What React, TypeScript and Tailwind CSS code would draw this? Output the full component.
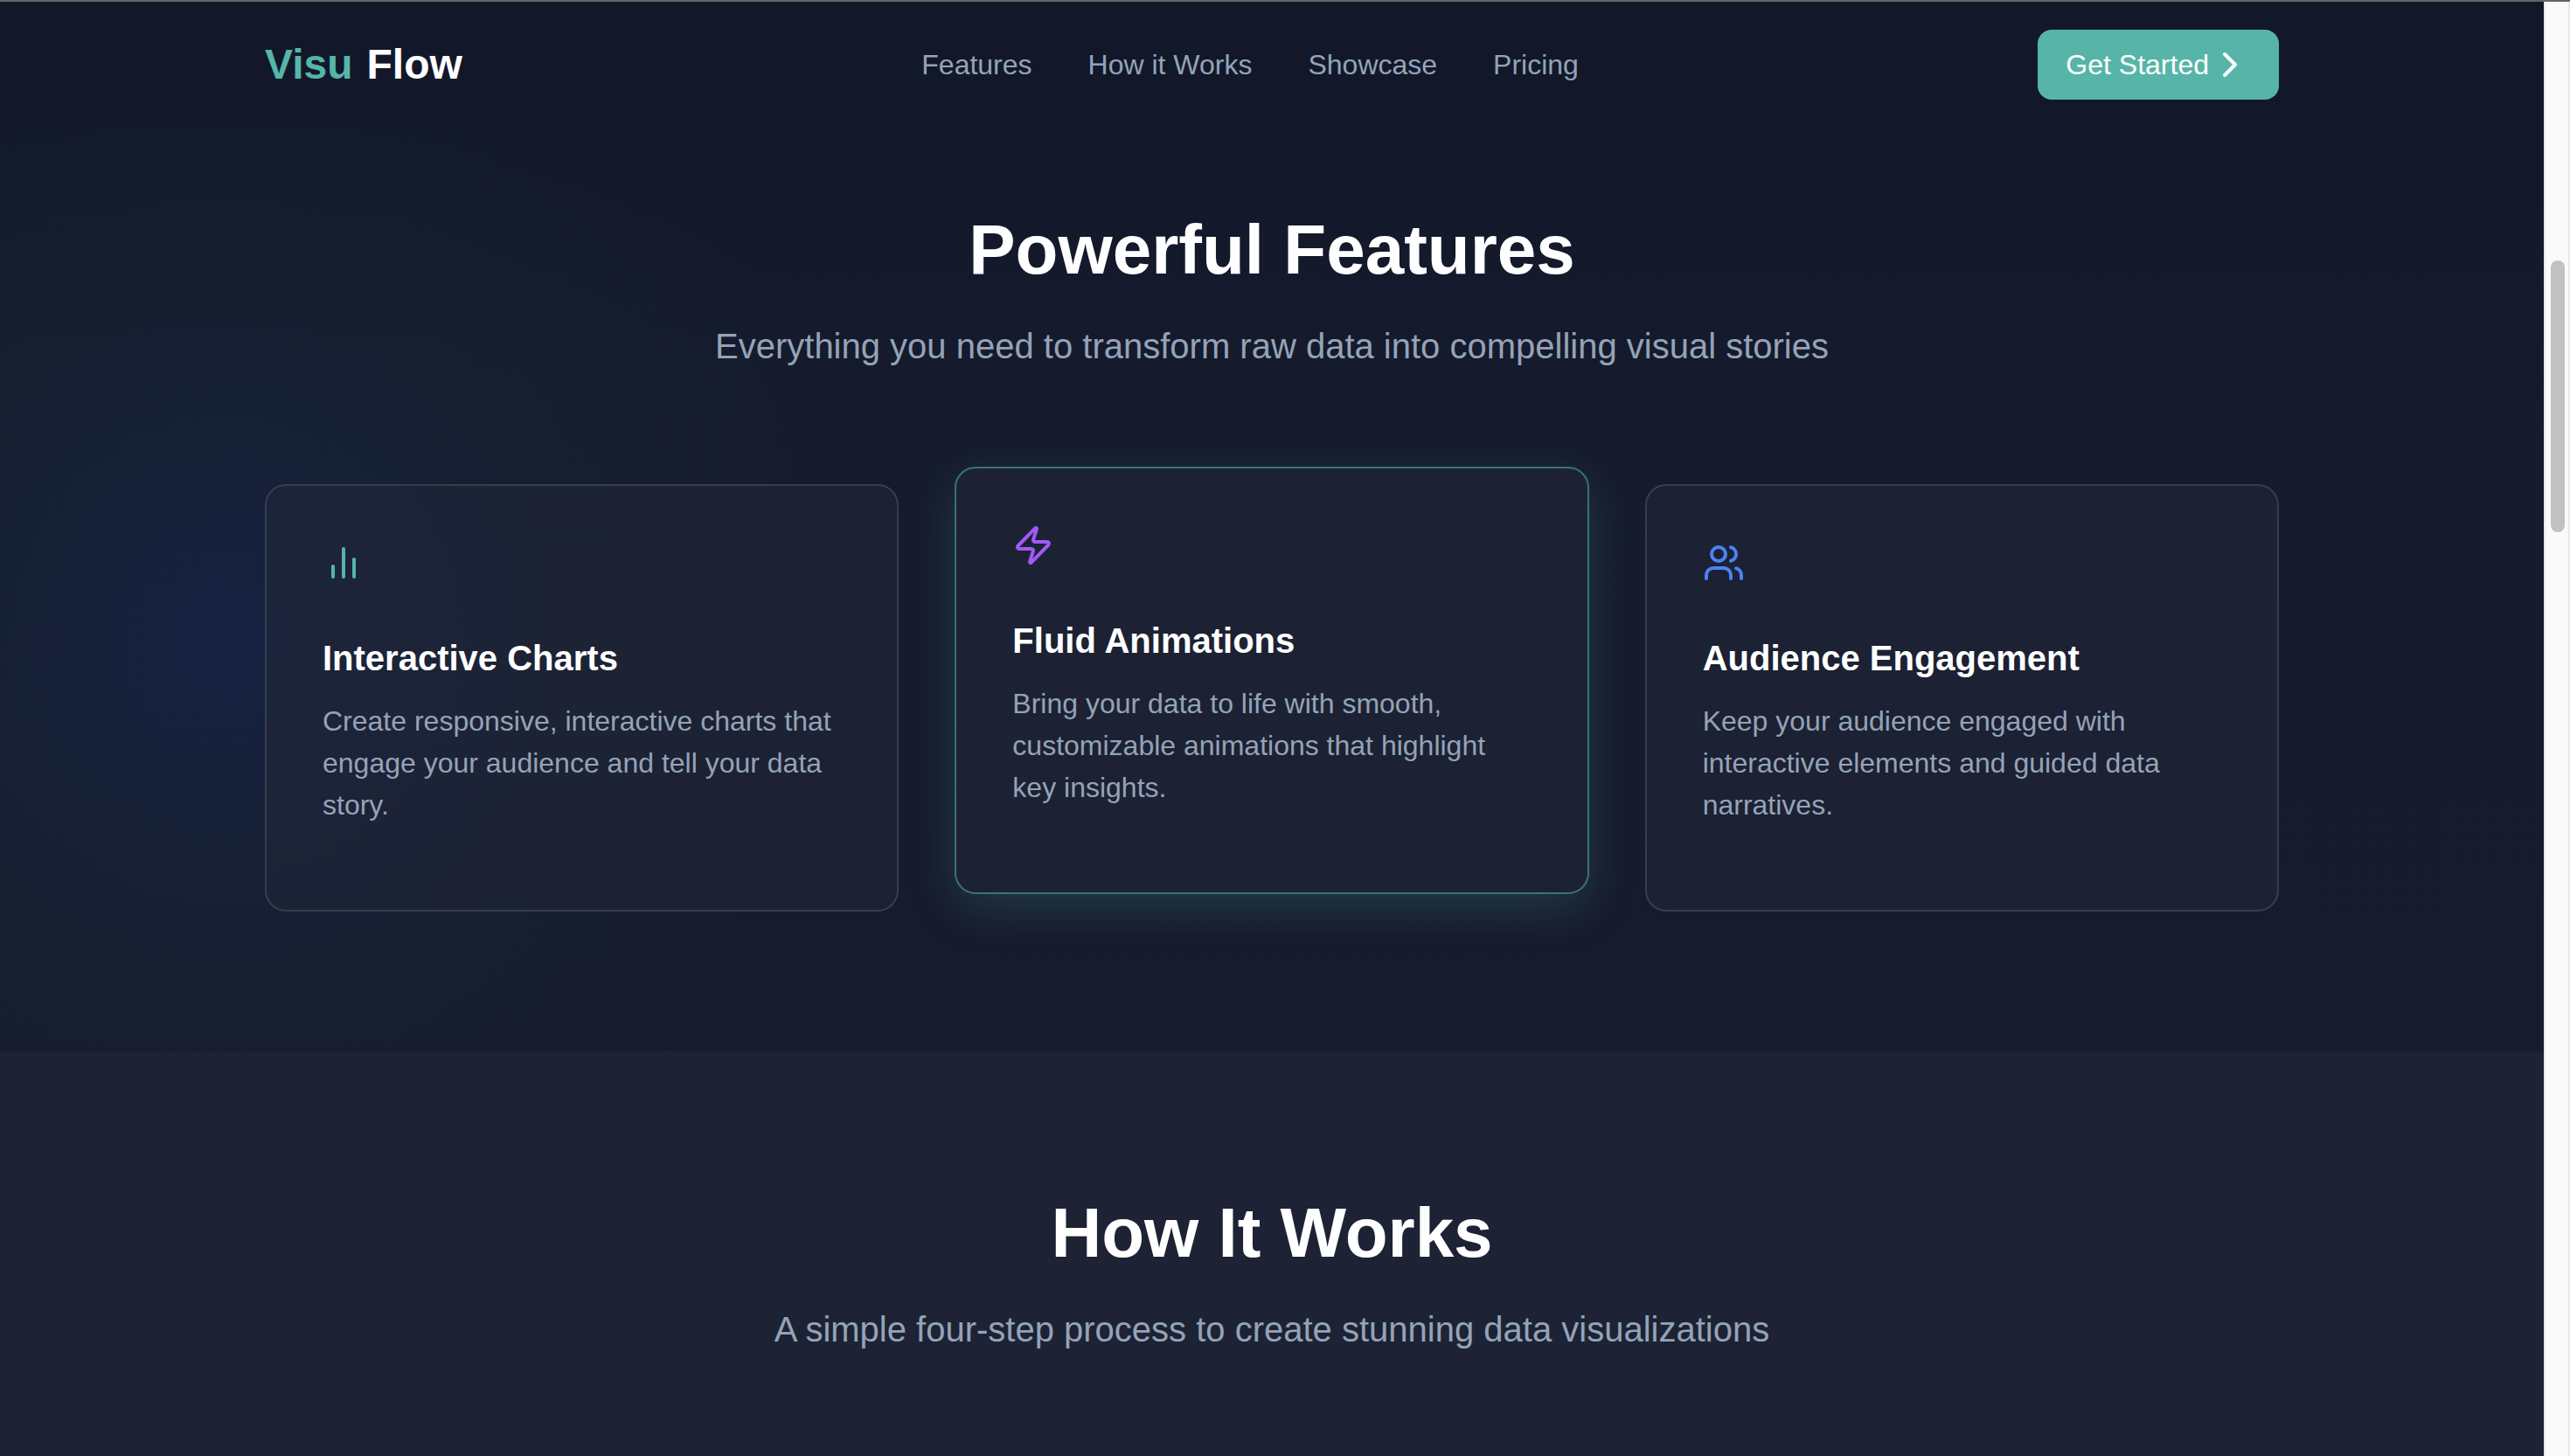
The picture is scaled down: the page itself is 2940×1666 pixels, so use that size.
import React from "react";

type IconProps = { className?: string; children: React.ReactNode };

function Icon({ className = "", children }: IconProps) {
  return (
    <svg
      viewBox="0 0 24 24"
      fill="none"
      stroke="currentColor"
      strokeWidth={2}
      strokeLinecap="round"
      strokeLinejoin="round"
      aria-hidden="true"
      className={`size-12 shrink-0 ${className}`}
    >
      {children}
    </svg>
  );
}

const navLinks = [
  { label: "Features", href: "#features" },
  { label: "How it Works", href: "#how-it-works" },
  { label: "Showcase", href: "#showcase" },
  { label: "Pricing", href: "#pricing" },
];

const features = [
  {
    title: "Interactive Charts",
    text: "Create responsive, interactive charts that engage your audience and tell your data story.",
    active: false,
    icon: (
      <Icon className="text-[#56b5a8]">
        <path d="M18 20V10M12 20V4M6 20v-6" />
      </Icon>
    ),
  },
  {
    title: "Fluid Animations",
    text: "Bring your data to life with smooth, customizable animations that highlight key insights.",
    active: true,
    icon: (
      <Icon className="text-[#a259f7]">
        <path d="M4 14a1 1 0 0 1-.78-1.63l9.9-10.2a.5.5 0 0 1 .86.46l-1.92 6.02A1 1 0 0 0 13 10h7a1 1 0 0 1 .78 1.63l-9.9 10.2a.5.5 0 0 1-.86-.46l1.92-6.02A1 1 0 0 0 11 14z" />
      </Icon>
    ),
  },
  {
    title: "Audience Engagement",
    text: "Keep your audience engaged with interactive elements and guided data narratives.",
    active: false,
    icon: (
      <Icon className="text-[#4d82f3]">
        <path d="M16 21v-2a4 4 0 0 0-4-4H6a4 4 0 0 0-4 4v2" />
        <circle cx="9" cy="7" r="4" />
        <path d="M22 21v-2a4 4 0 0 0-3-3.87M16 3.13a4 4 0 0 1 0 7.75" />
      </Icon>
    ),
  },
];

function Header() {
  return (
    <header className="bg-[#121829] py-8">
      <div className="mx-auto flex w-full max-w-[2304px] items-center justify-between">
        <a href="#top" className="flex gap-4 text-[48px] leading-[72px] font-bold text-white">
          <span className="text-[#56b5a8]">Visu</span>
          <span>Flow</span>
        </a>
        <nav className="flex gap-16" aria-label="Main">
          {navLinks.map((link) => (
            <a key={link.href} href={link.href} className="text-[32px] leading-[48px] text-[#94a3b8]">
              {link.label}
            </a>
          ))}
        </nav>
        <button
          type="button"
          className="flex h-20 items-center rounded-2xl bg-[#56b5a8] px-8 text-[32px] leading-[48px] text-white"
        >
          Get Started
          <Icon>
            <path d="m9 18 6-6-6-6" />
          </Icon>
        </button>
      </div>
    </header>
  );
}

function SectionTitle({ title, subtitle }: { title: string; subtitle: string }) {
  return (
    <div className="text-center">
      <h2 className="text-[80px] leading-[96px] font-bold text-white">{title}</h2>
      <p className="mt-8 text-[40px] leading-[60px] text-[#94a3b8]">{subtitle}</p>
    </div>
  );
}

function FeatureCard({ title, text, icon, active }: (typeof features)[number]) {
  const look = active
    ? "-translate-y-5 border-[#3a7272] bg-[#1c2233] shadow-[0_16px_54px_rgba(86,181,168,0.2)]"
    : "border-[#333f4f] bg-[#212738]/60";
  return (
    <article className={`rounded-3xl border-2 p-16 pb-24 ${look}`}>
      {icon}
      <h3 className="mt-[61px] text-[40px] leading-[48px] font-bold text-white">{title}</h3>
      <p className="mt-6 text-[32px] leading-[48px] text-[#94a3b8]">{text}</p>
    </article>
  );
}

function Scrollbar() {
  return (
    <div className="w-[30px] shrink-0 border-x-2 border-[#e9e9e9] bg-[#fafafa] px-[6px] pt-[296px]" aria-hidden="true">
      <div className="h-[311px] w-4 rounded-full bg-[#c1c1c1]" />
    </div>
  );
}

export default function App() {
  return (
    <div
      id="top"
      className="flex h-screen overflow-hidden border-t-2 border-[#656466] bg-[#151b2c] font-['Liberation_Sans',Arial,sans-serif]"
    >
      <div className="min-w-0 flex-1 overflow-hidden bg-[radial-gradient(circle_at_260px_730px,rgba(24,40,90,0.5)_0px,rgba(24,42,84,0.42)_110px,rgba(24,42,68,0.36)_250px,rgba(23,38,54,0.3)_420px,rgba(21,27,44,0)_740px),linear-gradient(to_bottom,#121829_144px,#151b2c_420px,#161b2d_1200px)]">
        <Header />
        <main>
          <section id="features" className="pt-[92px] pb-40">
            <div className="mx-auto w-full max-w-[2304px]">
              <SectionTitle
                title="Powerful Features"
                subtitle="Everything you need to transform raw data into compelling visual stories"
              />
              <div className="mt-32 grid grid-cols-3 gap-16">
                {features.map((feature) => (
                  <FeatureCard key={feature.title} {...feature} />
                ))}
              </div>
            </div>
          </section>
          <section id="how-it-works" className="bg-[#1d2334] py-40">
            <SectionTitle
              title="How It Works"
              subtitle="A simple four-step process to create stunning data visualizations"
            />
          </section>
        </main>
      </div>
      <Scrollbar />
    </div>
  );
}
